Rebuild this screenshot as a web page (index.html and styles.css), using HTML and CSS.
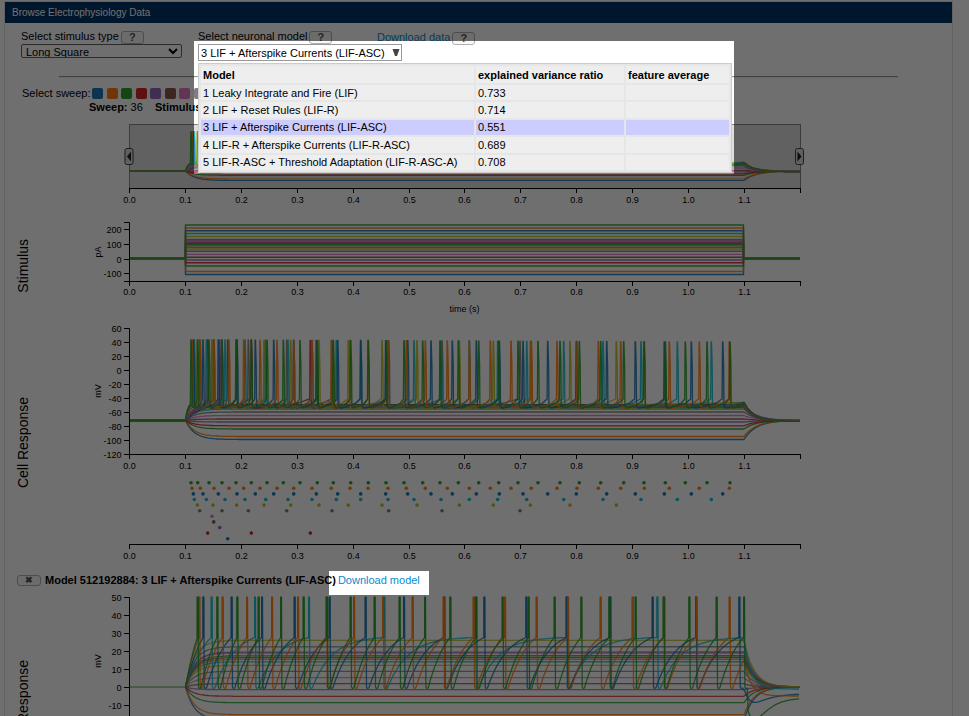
FILE: index.html
```html
<!DOCTYPE html>
<html lang="en">
<head>
<meta charset="utf-8">
<title>Browse Electrophysiology Data</title>
<link rel="stylesheet" href="styles.css">
</head>
<body>
<main class="panel">
  <h1 class="panel-title">Browse Electrophysiology Data</h1>

  <section class="controls">
    <div class="control">
      <div class="control-head">
        <label for="stimulus-type">Select stimulus type</label>
        <button class="help" type="button">?</button>
      </div>
      <select id="stimulus-type" class="stimulus-select"><option>Long Square</option></select>
    </div>
    <div class="control">
      <div class="control-head">
        <label for="model-picker">Select neuronal model</label>
        <button class="help" type="button">?</button>
      </div>
      <button id="model-picker" class="picker" type="button"><span>3 LIF + Afterspike Currents (LIF-ASC)</span><svg class="arrow" viewBox="0 0 8 9" width="8" height="9"><path d="M.5 1H7.500L5 8H3z" fill="#444"/></svg></button>
      <table class="menu">
        <thead><tr><th class="c-model">Model</th><th class="c-ratio">explained variance ratio</th><th class="c-avg">feature average</th></tr></thead>
        <tbody>
          <tr><td>1 Leaky Integrate and Fire (LIF)</td><td>0.733</td><td></td></tr>
          <tr><td>2 LIF + Reset Rules (LIF-R)</td><td>0.714</td><td></td></tr>
          <tr class="selected"><td>3 LIF + Afterspike Currents (LIF-ASC)</td><td>0.551</td><td></td></tr>
          <tr><td>4 LIF-R + Afterspike Currents (LIF-R-ASC)</td><td>0.689</td><td></td></tr>
          <tr><td>5 LIF-R-ASC + Threshold Adaptation (LIF-R-ASC-A)</td><td>0.708</td><td></td></tr>
        </tbody>
      </table>
    </div>
    <div class="control">
      <div class="control-head control-head-link">
        <a class="link" href="#data">Download data</a>
        <button class="help" type="button">?</button>
      </div>
    </div>
  </section>

  <hr class="rule">

  <section class="sweeps">
    <span>Select sweep:</span>
    <div class="swatches" id="swatches"></div>
  </section>
  <p class="sweep-info"><b>Sweep:</b> 36 <b class="stim">Stimulus:</b></p>

  <section class="row">
    <div class="side"></div>
    <svg id="overview" class="chart" viewBox="41 114 770 98" width="770" height="98"></svg>
  </section>
  <section class="row">
    <div class="side"><span>Stimulus</span></div>
    <svg id="stimulus" class="chart" viewBox="41 212 770 108" width="770" height="108"></svg>
  </section>
  <section class="row">
    <div class="side"><span>Cell Response</span></div>
    <div>
      <svg id="cell" class="chart" viewBox="41 320 770 154" width="770" height="154"></svg>
      <svg id="raster" class="chart" viewBox="41 474 770 92" width="770" height="92"></svg>
    </div>
  </section>
  <div class="model-head">
    <button class="close" type="button">✖</button>
    <b>Model 512192884: 3 LIF + Afterspike Currents (LIF-ASC)</b>
    <a class="link" href="#model">Download model</a>
  </div>
  <section class="row">
    <div class="side side-model"><span>Model Response</span></div>
    <svg id="model" class="chart" viewBox="41 594 770 122" width="770" height="122"></svg>
  </section>
</main>
<div class="shade"></div>
<script src="charts.js"></script>
</body>
</html>
```
FILE: styles.css
```css
* { box-sizing: border-box; }

body {
  margin: 0;
  height: 100vh;
  overflow: hidden;
  padding-top: 1px;
  background: #fff;
  color: #000;
  font: 11px/14px "Liberation Sans", Arial, sans-serif;
}

button, select { font: inherit; color: inherit; }

.panel {
  margin: 0 16px 0 4px;
  border: 1px solid #e0e0e0;
  border-bottom: 0;
}

.panel-title {
  margin: 0;
  padding: 0 7px;
  background: #003366;
  color: #fff;
  font-size: 10px;
  font-weight: normal;
  line-height: 21px;
}

.controls {
  display: flex;
  padding: 6px 16px 0;
  height: 53px;
}

.control { position: relative; width: 177px; }
.control + .control { width: 179px; }
.control-head { display: flex; gap: 2px; height: 15px; }
.control-head-link { padding-top: 1px; }

.help, .close {
  padding: 0;
  border: 1px solid #b0b0b0;
  border-radius: 3px;
  background: #f8f8f8;
  color: #555;
  font-weight: bold;
  line-height: 11px;
}
.help { width: 23px; height: 13px; margin-top: 2px; }
.close { width: 24px; height: 11px; font-size: 9px; line-height: 9px; }

.link { color: #0a8bd0; text-decoration: none; }

.stimulus-select {
  display: block;
  width: 161px;
  height: 14px;
  padding: 0;
  border: 1px solid #666;
  border-radius: 2px;
  background: #fff;
}

.picker {
  display: flex;
  align-items: center;
  justify-content: space-between;
  width: 204px;
  height: 17px;
  padding: 0 1px 0 2px;
  border: 1px solid #999;
  background: #fff;
  white-space: nowrap;
}
.arrow { display: block; }

.menu {
  position: absolute;
  top: 34px;
  left: 0;
  z-index: 2;
  width: 534px;
  height: 110px;
  table-layout: fixed;
  border: 1px solid #ccc;
  border-spacing: 2px;
  background: #e6e6e6;
  line-height: 14px;
}
.menu th, .menu td { height: 15px; padding: 0 2px; background: #eee; text-align: left; white-space: nowrap; }
.menu th { height: 17px; padding-top: 1px; }
.menu .selected td { background: #ccf; }
.menu .c-model { width: 273px; }
.menu .c-ratio { width: 148px; }

.rule {
  margin: 0 54px;
  border: 0;
  border-top: 1px solid #999;
  border-bottom: 1px solid #eee;
}

.sweeps { display: flex; gap: 2px; padding: 8px 0 0 17px; }
.swatches { display: grid; grid-template-columns: repeat(8, 1fr); width: 116px; }
.swatch { width: 11px; height: 11px; margin-top: 2px; padding: 0; border: 0; border-radius: 2px; }

.sweep-info { margin: 0; padding-left: 84px; }
.stim { margin-left: 9px; }

.row { display: flex; }
.side {
  display: flex;
  align-items: center;
  justify-content: center;
  width: 36px;
  font-size: 14px;
  line-height: 18px;
}
.side span { writing-mode: vertical-rl; transform: rotate(180deg); white-space: nowrap; }
.side-model { align-items: flex-start; height: 122px; padding-top: 66px; }

.chart { display: block; font-size: 9px; }
.chart text { fill: #000; text-anchor: middle; }
.chart .left { text-anchor: end; }
.trace { fill: none; stroke-linejoin: round; }
.axis { fill: none; stroke: #000; }

.model-head { display: flex; align-items: center; gap: 4px; height: 28px; padding-left: 12px; }
.model-head b { margin-right: -2px; }

.shade {
  position: fixed;
  inset: 0;
  z-index: 5;
  pointer-events: none;
  background: rgba(0, 0, 0, 0.565);
  clip-path: path(evenodd, "M0 0H4000V4000H0Z M194 41H734V174H194Z M329 571H429V595H329Z");
}
```
FILE: charts.js
```js
const C = { blue: '#1f77b4', orange: '#ff7f0e', green: '#2ca02c', red: '#d62728', purple: '#9467bd',
  brown: '#8c564b', pink: '#e377c2', gray: '#7f7f7f', olive: '#bcbd22', cyan: '#17becf' };
const T0 = 129, STEP = 55.9, ON = 185.5, OFF = 744, END = 800;

['blue', 'orange', 'green', 'red', 'purple', 'brown', 'pink', 'gray'].forEach(name => {
  const b = document.createElement('button');
  b.className = 'swatch';
  b.style.background = C[name];
  b.setAttribute('aria-label', 'Sweep ' + name);
  document.getElementById('swatches').append(b);
});

const line = (d, color, width = 1.3, opacity = 0.9) =>
  `<path class="trace" d="${d}" stroke="${C[color]}" stroke-width="${width}" stroke-opacity="${opacity}"/>`;
const pts = a => 'M' + a.map(p => p[0].toFixed(1) + ' ' + p[1].toFixed(1)).join('L');

function xAxis(y, label) {
  let s = `<path class="axis" d="M${T0} ${y + .5}H${END}"/>`;
  for (let i = 0; i <= 12; i++) {
    const x = Math.round(T0 + i * STEP) + .5;
    s += `<path class="axis" d="M${x} ${y}v5"/>`;
    if (i < 12) s += `<text x="${x}" y="${label}">${(i / 10).toFixed(1)}</text>`;
  }
  return s;
}
function yAxis(top, bottom, values, toY, unit, unitY, ends = true) {
  let s = `<path class="axis" d="M${ends ? 124 : T0} ${top + .5}H129.5V${bottom + .5}${ends ? 'H124' : ''}"/>`;
  values.forEach(v => {
    const y = Math.round(toY(v));
    s += `<path class="axis" d="M124 ${y + .5}H129"/><text class="left" x="121.500" y="${y + 4}">${v}</text>`;
  });
  return s + `<text transform="translate(101 ${unitY}) rotate(-90)">${unit}</text>`;
}

/* Spike positions per sweep, in thirds of a chart unit */
const spikes = [
  ['green', [573,593,627,666,708,754,801,850,900,952,1000,1052,1105,1158,1212,1268,1320,1375,1436,1496,1554,1614,1680,1738,1802,1871,1932,1996,2056,2121,2190]],
  ['orange', [576,601,642,687,731,780,831,881,936,994,1050,1104,1164,1219,1276,1342,1408,1471,1533,1594,1671,1731,1795,1862,1933,2008,2098,2188]],
  ['blue', [580,609,655,711,766,821,881,949,1013,1082,1157,1223,1293,1357,1429,1498,1569,1643,1729,1820,1906,1993,2074,2168]],
  ['cyan', [583,619,675,735,797,864,936,1009,1082,1164,1242,1323,1408,1493,1580,1691,1809,1923,2032,2134]],
  ['olive', [592,639,710,792,872,957,1045,1146,1251,1378,1480,1591,1710,1849]],
  ['gray', [599,666,745,860,996,1166,1326,1560]],
  ['pink', [636]], ['brown', [641]], ['purple', [659]], ['red', [623,754,931]], ['blue', [683]]
].map(([c, a]) => [c, a.map(v => v / 3)]);

/* Membrane potential trace without spikes */
function passive(level, rest, tau, tauOff, start = T0) {
  const a = [[start, rest], [ON, rest]];
  for (let x = ON; x <= ON + tau * 6; x += 2) a.push([x, level + (rest - level) * Math.exp(-(x - ON) / tau)]);
  a.push([OFF, level]);
  for (let x = OFF; x <= END; x += 2) a.push([x, rest + (level - rest) * Math.exp(-(x - OFF) / tauOff)]);
  return a;
}

const cellRest = 420.5;
const cell = [[439.5,'blue'],[436.5,'orange'],[429,'green'],[425.8,'red'],[422,'purple'],[419,'brown'],[415.5,'pink'],[412,'gray'],[409,'cyan'],[408,'olive'],[405,'purple']]
  .map(([y, c]) => [c, passive(y, cellRest, 9, 12)]);
[...spikes].reverse().forEach(([color, xs], k) => {
  const level = 405 + (k % 3);
  const a = [[T0, cellRest], [ON, cellRest]];
  const first = xs[0];
  for (let i = 1; i <= 5; i++) a.push([ON + (first - ON) * i / 6, 420 - 18 * (1 - Math.exp(-i / 2.5))]);
  xs.forEach((x, i) => {
    const gap = (xs[i + 1] || OFF) - x;
    a.push([x - .6, 399], [x - .2, 339 + x / 240], [x + .2, 339 + x / 240], [x + .9, 365], [x + 1.2, 406], [x + 3, 408]);
    if (xs[i + 1]) for (const [u, v] of [[.35, 407], [.6, 405], [.8, 403], [.93, 400]]) if (gap * u > 3.5) a.push([x + gap * u, v]);
  });
  a.push([xs[xs.length - 1] + 12, level], [OFF, xs.length > 10 ? 402.5 : level]);
  const last = a[a.length - 1][1];
  for (let x = OFF + 2; x <= END; x += 2) a.push([x, cellRest + 1 + (last - cellRest - 1) * Math.exp(-(x - OFF) / 10)]);
  cell.push([color, a]);
});

document.getElementById('overview').innerHTML =
  '<rect x="129.500" y="124.500" width="671" height="64" fill="#dedede" stroke="#888"/>' +
  cell.map(([c, a]) => line(pts(a.map(([x, y]) => [x, 171.2 + (y - cellRest) * .49])), c, 1.2)).join('') +
  xAxis(188, 203) +
  [129, 799.5].map((x, i) => `<rect x="${x - 4}" y="148.500" width="8" height="16" rx="2" fill="#ddd" stroke="#444"/>` +
    `<path d="M${i ? x - 2 : x + 2} 151.500v10l${i ? 4 : -4} -5z" fill="#222"/>`).join('');

const steps = [[274.5,'blue'],[271.5,'orange'],[266,'green'],[262.8,'red'],[260,'purple'],[257.3,'brown'],[254.4,'pink'],[251.3,'gray'],[249,'olive'],[247.3,'cyan'],[245.7,'orange'],[244.3,'green'],[243,'red'],[242,'purple'],[240.8,'pink'],[239.5,'gray'],[236.5,'olive'],[233.5,'cyan'],[230.8,'blue'],[228,'orange'],[225,'green']];
document.getElementById('stimulus').innerHTML =
  steps.map(([y, c]) => line(`M${T0} 258.500H${ON}V${y}H${OFF - .5}V258.500H${END}`, c, 1.4)).join('') +
  yAxis(222, 281, [200, 100, 0, -100], v => 258.600 - v * .1475, 'pA', 252) + xAxis(281, 295) +
  '<text x="464.500" y="312">time (s)</text>';

document.getElementById('cell').innerHTML = cell.map(([c, a]) => line(pts(a), c)).join('') +
  yAxis(328, 454, [60, 40, 20, 0, -20, -40, -60, -80, -100, -120], v => 370 - v * .7, 'mV', 391, false) + xAxis(454, 469);

document.getElementById('raster').innerHTML = spikes.map(([c, xs], r) => xs.map(x =>
  `<circle cx="${x.toFixed(1)}" cy="${(482.7 + r * 5.6).toFixed(1)}" r="1.800" fill="${C[c]}"/>`).join('')).join('') + xAxis(544, 559);

/* Model response: plateaus, then integrate-and-fire traces */
const rest = 687;
let out = [[720,'blue'],[714.7,'orange'],[702.7,'green'],[696.3,'red'],[689.7,'purple'],[683.7,'brown'],[677.7,'pink'],[671.3,'gray'],[665.3,'olive'],[661.7,'cyan'],[659.3,'orange'],[657.5,'brown'],[655.700,'green'],[653,'pink'],[652,'purple'],[646.7,'gray'],[640.3,'olive']]
  .map(([y, c]) => line(pts(passive(y, rest, 9, 10, ON)), c, 1.3, .8)).join('') +
  line('M129 687H185.500', 'green', 1.2, .9);
[
  ['cyan', [634,764,926,1152,1425,1698,1971], 689],
  ['blue', [609,694,785,883,988,1096,1211,1332,1452,1578,1700,1830,1957,2087,2217], 694],
  ['orange', [597,667,740,815,893,978,1061,1148,1237,1330,1420,1514,1609,1703,1801,1897,1992,2089,2188], 696],
  ['green', [592,651,711,775,842,910,980,1051,1123,1198,1274,1350,1428,1507,1585,1663,1743,1827,1906,1990,2067,2149,2231], 698]
].forEach(([color, thirds, tail]) => {
  const xs = thirds.map(v => v / 3);
  const a = [[ON, rest]];
  const rise = (x0, x1, y0, limit = OFF) => {
    const gap = x1 - x0, k = gap / 20;
    for (let i = 1; i <= 16; i++) {
      const x = x0 + gap * i / 16;
      if (x <= limit) a.push([x, y0 - (y0 - 637.5) * (1 - Math.exp(-k * i / 16)) / (1 - Math.exp(-k))]);
    }
  };
  rise(ON, xs[0], rest);
  let bars = '';
  xs.forEach((x, i) => {
    a.push([x, 597], [x + .8, 597], [x + 1.2, 687], [x + 2, 688.500], [x + 3.500, 688]);
    const next = xs[i + 1] || x + (x - xs[i - 1]);
    rise(x + 3.500, next, 688);
    bars += `M${(x + .3).toFixed(1)} 597V638`;
  });
  const y = a[a.length - 1][1];
  const dip = color === 'green' ? 34 : color === 'blue' ? 14 : 0;
  for (let x = Math.max(OFF, a[a.length - 1][0]) + 1; x <= END; x += 1.500) {
    const u = x - OFF;
    a.push([x, tail + (y - tail) * Math.exp(-u / 7) + dip * (u / 9) * Math.exp(1 - u / 9) * .7]);
  }
  out += line(pts(a), color, 1.3, .85) + line(bars, color, 2, .8);
});
document.getElementById('model').innerHTML = out +
  yAxis(597, 730, [50, 40, 30, 20, 10, 0, -10], v => 687 - v * 1.8, 'mV', 661, false);
```
